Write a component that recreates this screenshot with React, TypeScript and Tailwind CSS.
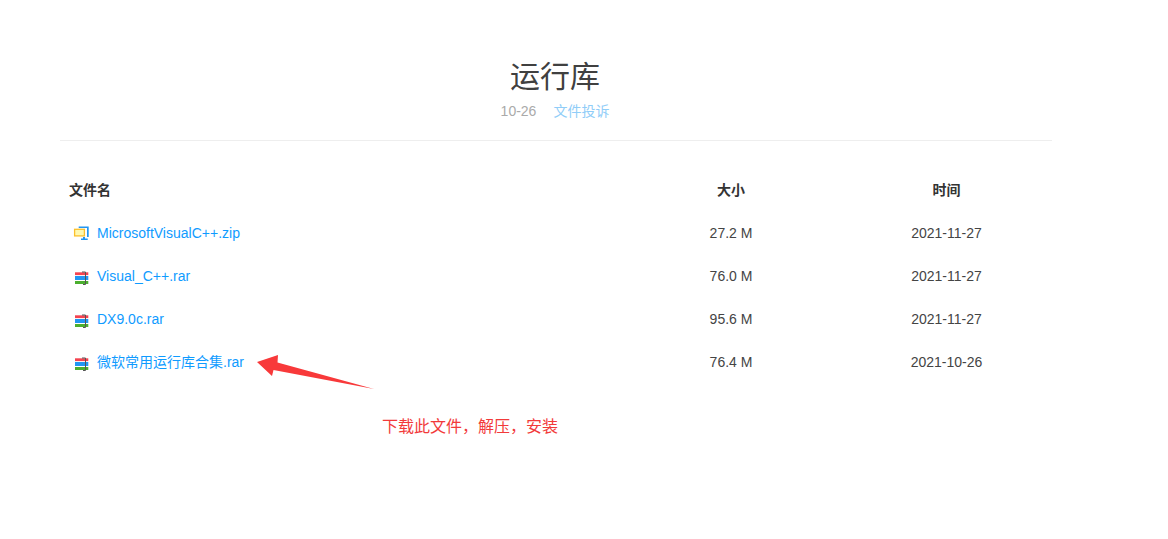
const files = [
  { name: 'MicrosoftVisualC++.zip', size: '27.2 M', date: '2021-11-27', type: 'zip' },
  { name: 'Visual_C++.rar', size: '76.0 M', date: '2021-11-27', type: 'rar' },
  { name: 'DX9.0c.rar', size: '95.6 M', date: '2021-11-27', type: 'rar' },
  { name: '微软常用运行库合集.rar', size: '76.4 M', date: '2021-10-26', type: 'rar' },
];

function ZipIcon() {
  return (
    <svg width="16" height="18" viewBox="0 -1 16 18" className="shrink-0">
      <path d="M5.7 1.5h10V12H14V3H5.7z" fill="#2196f3" />
      <path d="M10 12h2v1.5h2.7V15H8v-1.5h2z" fill="#2196f3" />
      <rect x="1.6" y="4.3" width="9.8" height="6.6" fill="#fff9b0" stroke="#fbc02d" strokeWidth="1.3" />
    </svg>
  );
}

function RarIcon() {
  return (
    <svg width="16" height="18" viewBox="0 -1 16 18" className="shrink-0">
      <rect x="2" y="4.3" width="13.3" height="2.8" fill="#f44350" />
      <rect x="2" y="8" width="13.3" height="4" fill="#2196f3" />
      <rect x="2" y="13" width="13.3" height="3" fill="#4caf2f" />
      <path d="M9 4h3.5v12.5H10" fill="none" stroke="#555" strokeWidth="1" />
    </svg>
  );
}

export default function App() {
  return (
    <div className="relative h-[539px] w-[1168px] overflow-hidden bg-white font-['Liberation_Sans','Noto_Sans_CJK_SC',sans-serif]">
      <div className="ml-[60px] w-[992px] pt-[57px]">
        {/* Header */}
        <div className="border-b border-[#eeeeee] pb-[19px] pr-[2px] text-center">
          <h1 className="text-[30px] leading-[40px] text-[#404040]">运行库</h1>
          <div className="mt-[4px] flex justify-center gap-[17px] text-sm leading-[20px]">
            <span className="text-[#aaaaaa]">10-26</span>
            <a className="text-[#90cdf8]">文件投诉</a>
          </div>
        </div>

        {/* File table */}
        <div className="mt-[28px] grid grid-cols-[563px_216px_215px] text-sm text-[#444444]">
          <div className="flex h-[42px] items-center pl-[9px] font-bold text-[#333333]">文件名</div>
          <div className="flex h-[42px] items-center justify-center font-bold text-[#333333]">大小</div>
          <div className="flex h-[42px] items-center justify-center font-bold text-[#333333]">时间</div>
          {files.map((f) => (
            <div key={f.name} className="contents">
              <div className="flex h-[43px] items-center gap-[8px] pl-[13px]">
                {f.type === 'zip' ? <ZipIcon /> : <RarIcon />}
                <a className="text-[#0f9bff]">{f.name}</a>
              </div>
              <div className="flex h-[43px] items-center justify-center">{f.size}</div>
              <div className="flex h-[43px] items-center justify-center">{f.date}</div>
            </div>
          ))}
        </div>
      </div>

      {/* Annotation over the page */}
      <svg width="130" height="45" viewBox="0 0 130 45" className="absolute left-[250px] top-[348px]">
        <path d="M7 14L28 7L27.5 14.5L124 41L23.5 22L22 28Z" fill="#f8393a" />
      </svg>
      <span className="absolute left-[382px] top-[415px] text-base leading-[24px] text-[#f23a3a]">下载此文件，解压，安装</span>
    </div>
  );
}
